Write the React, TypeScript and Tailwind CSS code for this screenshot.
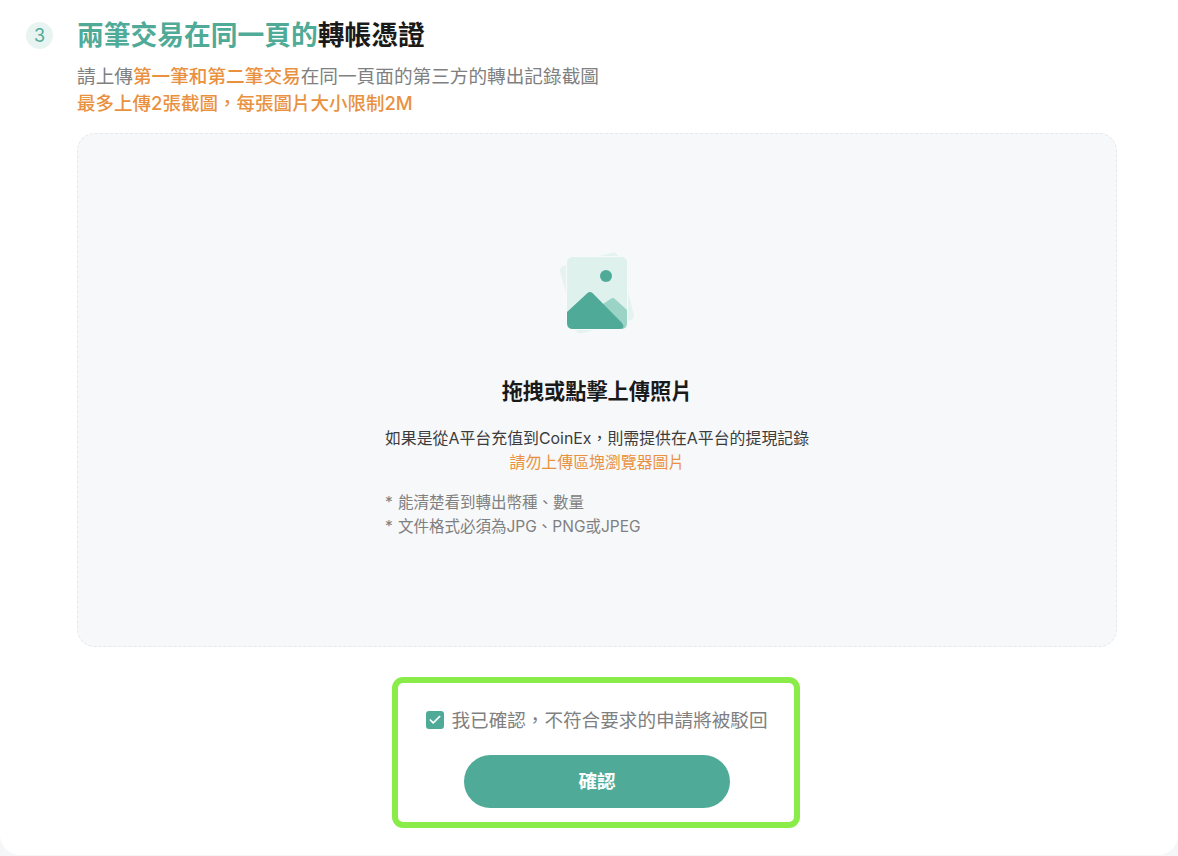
import { Check } from 'lucide-react';

const UploadIcon = () => (
  <svg width="110" height="100" viewBox="0 0 110 100" fill="none" className="mr-[4px]">
    <rect x="27" y="18" width="60" height="70" rx="5" fill="#e4f3ef" transform="rotate(-15 57 53)" />
    <rect x="26.500" y="16.500" width="61" height="73" rx="6" fill="#dff1ed" stroke="#f7f9fa" />
    <circle cx="66" cy="36" r="6" fill="#4fab98" />
    <path d="M60 66 L70.500 59 Q73 57 75.500 59.500 L87 70 V83 Q87 89 81 89 L78 84 Z" fill="#9bd3c7" />
    <path d="M27 72 L47.500 53 Q50 51 52.500 53 L82 83 Q86 89 79 89 H33 Q27 89 27 83 Z" fill="#4fab98" />
  </svg>
);

export default function App() {
  return (
    <div className="h-[856px] overflow-hidden bg-[#f5f6f8] font-['Inter','Noto_Sans_CJK_TC',sans-serif]">
      <div className="h-[855px] rounded-b-[20px] bg-white pl-[26px] pr-[61px] pt-[19px]">
        <div className="flex items-center gap-[24px]">
          <span className="flex size-[27px] items-center justify-center rounded-full bg-[#e8f4f1] text-[18px] text-[#4fab98]">3</span>
          <h1 className="text-[26.750px] leading-[32px] font-bold text-[#1a1a1a]">
            <span className="text-[#4fab98]">兩筆交易在同一頁的</span>轉帳憑證
          </h1>
        </div>

        <div className="ml-[51px]">
          <p className="mt-[11px] text-[18.650px] leading-[28px] text-[#808080]">
            請上傳<span className="font-medium text-[#e9913f]">第一筆和第二筆交易</span>在同一頁面的第三方的轉出記錄截圖
          </p>
          <p className="text-[18.500px] leading-[27px] font-medium text-[#e9913f]">最多上傳2張截圖，每張圖片大小限制2M</p>

          <div className="mt-[16px] flex h-[514px] flex-col items-center rounded-[18px] border border-dashed border-[#e6e8eb] bg-[#f7f8fa] pt-[106px]">
            <UploadIcon />
            <h2 className="mt-[36px] text-[21.200px] leading-[30px] font-bold text-[#1a1a1a]">拖拽或點擊上傳照片</h2>
            <div className="mt-[20px] text-center text-[15.900px] leading-[25px] text-[#3c3c3c]">
              <p>如果是從A平台充值到CoinEx，則需提供在A平台的提現記錄</p>
              <p className="-mt-[1px] text-[#e9913f]">請勿上傳區塊瀏覽器圖片</p>
            </div>
            <ul className="mt-[16px] w-[424px] text-[15.500px] leading-[24px] text-[#808080]">
              <li><span className="inline-block w-[13px]">*</span>能清楚看到轉出幣種、數量</li>
              <li><span className="inline-block w-[13px]">*</span>文件格式必須為JPG、PNG或JPEG</li>
            </ul>
          </div>

          <div className="mt-[30px] flex justify-center">
            <div className="mr-[2px] flex h-[151px] w-[408px] flex-col items-center rounded-[11px] border-[6px] border-[#8aec49] pl-[2px] pt-[24px]">
              <label className="flex items-center gap-[7px] text-[18.600px] leading-[26px] text-[#808080]">
                <span className="flex size-[18px] items-center justify-center rounded-[3px] bg-[#4fab98]">
                  <Check className="size-[14px] text-white" strokeWidth={3} />
                </span>
                我已確認，不符合要求的申請將被駁回
              </label>
              <button className="mt-[22px] h-[53px] w-[266px] rounded-full bg-[#4fab98] text-[18.600px] font-bold text-white">確認</button>
            </div>
          </div>
        </div>
      </div>
    </div>
  );
}
